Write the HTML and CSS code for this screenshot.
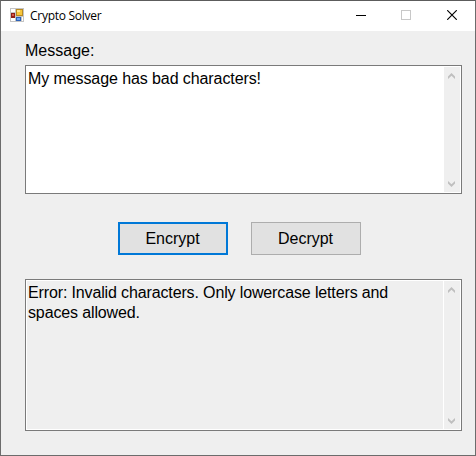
FILE: index.html
```
<!DOCTYPE html>
<html lang="en">
<head>
<meta charset="utf-8">
<title>Crypto Solver</title>
<link rel="stylesheet" href="styles.css">
</head>
<body>
<div class="window">
  <header class="titlebar">
    <svg class="app-icon" width="14" height="14" viewBox="0 0 14 14" shape-rendering="crispEdges">
      <path fill="#c4c4c4" d="M0 0h14v14H0z"/>
      <path fill="#fff" d="M1 1h4v3H1zM1 10h4v3H1zM12 9h1v4h-1z"/>
      <path fill="#b98a20" d="M6 1h7v7H6z"/>
      <path fill="#f7c63c" d="M7 2h5v5H7z"/>
      <path fill="#ffe58c" d="M7 2h3v2H7z"/>
      <path fill="#8f1d17" d="M1 5h4v5H1z"/>
      <path fill="#d9574a" d="M2 6h2v2H2z"/>
      <path fill="#2c61b8" d="M6 9h5v4H6z"/>
      <path fill="#6fa5f2" d="M7 10h3v2H7z"/>
    </svg>
    <span class="title">Crypto Solver</span>
    <div class="controls">
      <svg width="10" height="10" viewBox="0 0 10 10" shape-rendering="crispEdges"><path fill="#000" d="M0 5h10v1H0z"/></svg>
      <svg width="10" height="10" viewBox="0 0 10 10" shape-rendering="crispEdges"><path fill="none" stroke="#c8c8c8" d="M.5.5h9v9h-9z"/></svg>
      <svg class="close" width="10" height="10" viewBox="0 0 10 10"><path fill="none" stroke="#000" stroke-width="1.15" d="M.2.2l9.6 9.6M9.8.2L.2 9.8"/></svg>
    </div>
  </header>
  <main class="form">
    <div class="label">Message:</div>
    <div class="textbox message">
      <div class="text">My message has bad characters!</div>
      <div class="scrollbar">
        <svg width="7" height="6" viewBox="0 0 7 6"><path class="arrow" d="M0 3.5L3.5 0 7 3.5V6L3.5 2.7 0 6z"/></svg>
        <svg width="7" height="6" viewBox="0 0 7 6"><path class="arrow" d="M0 2.5L3.5 6 7 2.5V0L3.5 3.3 0 0z"/></svg>
      </div>
    </div>
    <div class="buttons">
      <button class="button default">Encrypt</button>
      <button class="button">Decrypt</button>
    </div>
    <div class="textbox result">
      <div class="text">Error: Invalid characters. Only lowercase letters and<br>spaces allowed.</div>
      <div class="scrollbar">
        <svg width="7" height="6" viewBox="0 0 7 6"><path class="arrow" d="M0 3.5L3.5 0 7 3.5V6L3.5 2.7 0 6z"/></svg>
        <svg width="7" height="6" viewBox="0 0 7 6"><path class="arrow" d="M0 2.5L3.5 6 7 2.5V0L3.5 3.3 0 0z"/></svg>
      </div>
    </div>
  </main>
</div>
</body>
</html>
```
FILE: styles.css
```
* { box-sizing: border-box; }
body {
  margin: 0;
  overflow: hidden;
  font: 16px/20px "Liberation Sans", Arial, sans-serif;
  color: #000;
}
.window {
  width: 476px;
  height: 456px;
  border: 1px solid #6c6c6c;
  border-top-color: #5c5c5c;
  background: #efefef;
}
.titlebar {
  display: flex;
  align-items: center;
  height: 30px;
  padding: 0 18px 0 9px;
  background: #fff;
}
.app-icon { margin-bottom: 2px; }
.title {
  margin-left: 6px;
  font: 12px/16px "Open Sans", "Noto Sans", sans-serif;
  letter-spacing: -0.27px;
}
.controls {
  display: flex;
  gap: 35px;
  margin-left: auto;
  margin-bottom: 2px;
}
.close { margin-left: 1px; }
.form { padding: 10px 13px 0 24px; }
.label { height: 24px; }
.textbox {
  display: flex;
  width: 437px;
  border: 1px solid #7a7a7a;
  outline: 1px solid #fff;
  outline-offset: -2px;
  padding: 1px;
}
.message { height: 129px; background: #fff; letter-spacing: -0.09px; }
.result { height: 152px; background: #efefef; letter-spacing: -0.135px; }
.text {
  flex: 1;
  padding: 2px 0 0 1px;
  white-space: nowrap;
}
.scrollbar {
  display: flex;
  flex-direction: column;
  justify-content: space-between;
  align-items: center;
  width: 17px;
  padding: 6px 1px 5px 0;
  border-left: 1px solid #fff;
  background: #efefef;
}
.arrow { fill: #bfbfbf; }
.buttons {
  display: flex;
  gap: 23px;
  padding: 28px 0 24px 93px;
}
.button {
  width: 110px;
  height: 33px;
  padding: 0 1px 0 0;
  border: 1px solid #adadad;
  background: #e1e1e1;
  font: inherit;
  color: inherit;
}
.default { border: 2px solid #0078d7; }
```
